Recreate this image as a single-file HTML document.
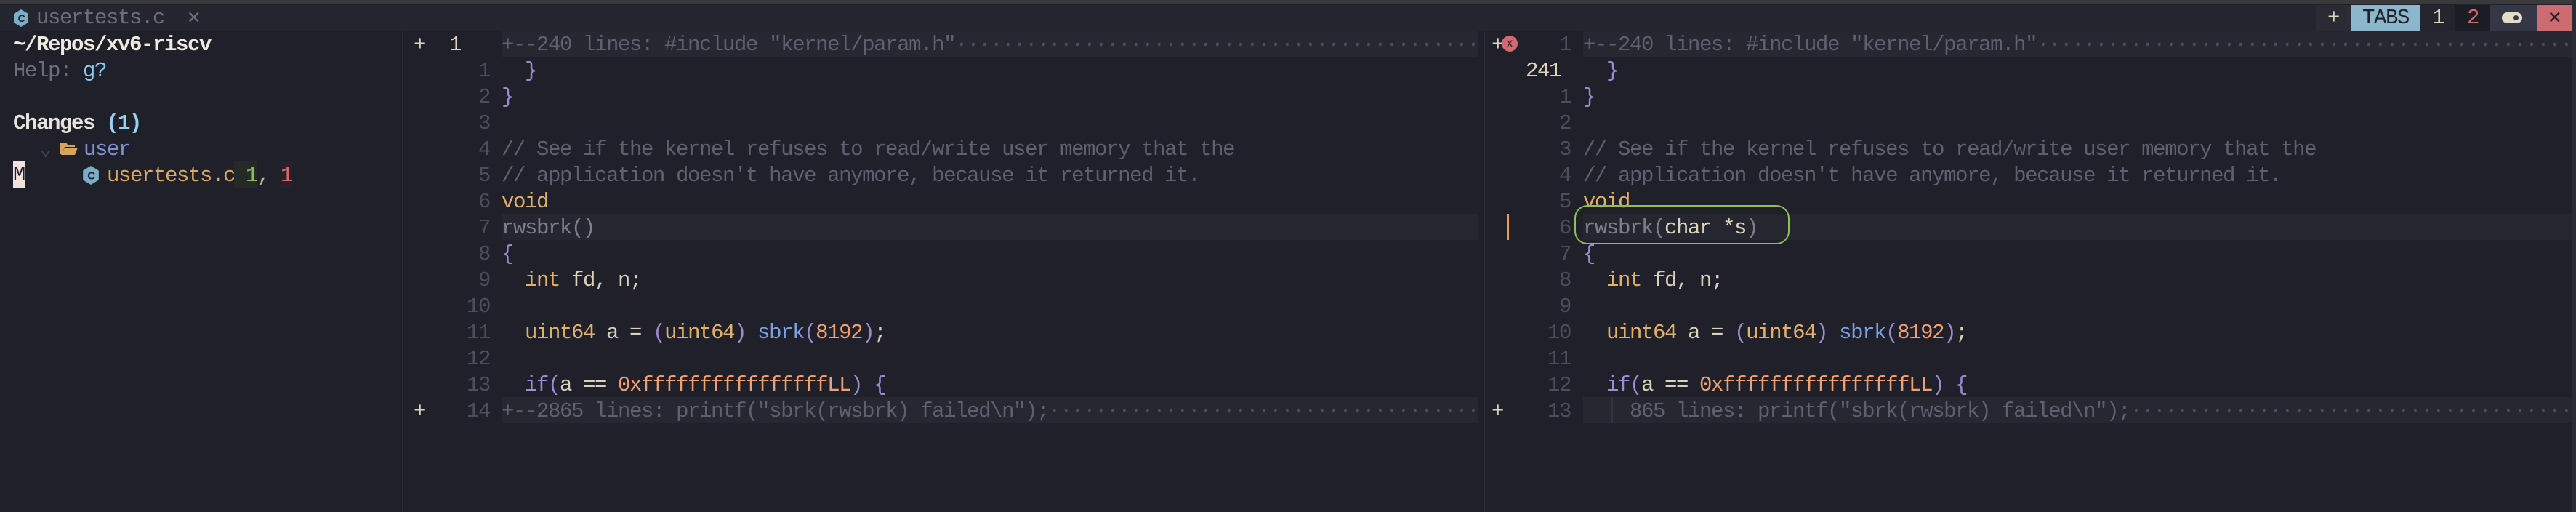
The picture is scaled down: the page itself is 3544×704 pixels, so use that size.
<!DOCTYPE html>
<html><head><meta charset="utf-8"><style>
*{margin:0;padding:0;box-sizing:border-box}
body{width:3544px;height:704px;background:#1f2029;overflow:hidden;position:relative;font-family:"Liberation Mono",monospace;font-size:29px;letter-spacing:-1.4px;color:#d8d2bc}
.a{position:absolute;white-space:pre;line-height:40px;height:36px}
.top{position:absolute;left:0;top:0;width:3544px;height:6px;background:#3a3a3c;border-bottom:1px solid #111}
.tabline{position:absolute;left:0;top:7px;width:3544px;height:35px;background:#24252e}
.ln{color:#4b4e5d;text-align:right}
.cm{color:#5d6070}
.fold{color:#5d6070;background:#262731;overflow:hidden}
.kw{color:#e3b06a}
.br{color:#9c8ad0}
.pl{color:#a08bd8}
.nu{color:#f0a070}
.fn{color:#7c9fe0}
.gr{color:#7c7f8c}
.cr{color:#ddd6bd}
.sep{position:absolute;top:42px;width:2px;height:662px;background:#2b2c36}
</style></head><body>
<div class="top"></div>
<div class="tabline"></div>
<svg style="position:absolute;left:18px;top:13px" width="22" height="24" viewBox="0 0 22 24"><polygon points="11,0 21,6 21,18 11,24 1,18 1,6" fill="#79aec6"/><text x="11" y="17" font-family="Liberation Sans" font-weight="bold" font-size="14" text-anchor="middle" fill="#1f2029">C</text></svg>
<div class="a" style="left:50px;top:5px;color:#6a6d7a">usertests.c  ✕</div>
<div class="a" style="left:3186px;top:7px;width:48px;height:35px;line-height:35px;background:#2a2b35;text-align:center;color:#ddd6bd">+</div>
<div class="a" style="left:3234px;top:7px;width:96px;height:35px;line-height:35px;background:#8cb6cc;text-align:center;color:#1f2029">TABS</div>
<div class="a" style="left:3330px;top:7px;width:48px;height:35px;line-height:35px;background:#24252e;text-align:center;color:#ddd6bd">1</div>
<div class="a" style="left:3378px;top:7px;width:48px;height:35px;line-height:35px;background:#1b1c24;text-align:center;color:#d06a70">2</div>
<div class="a" style="left:3426px;top:7px;width:64px;height:35px;background:#363746"><div style="position:absolute;left:16px;top:10px;width:28px;height:15px;border-radius:8px;background:#e4dcc4"><div style="position:absolute;right:5px;top:4px;width:7px;height:7px;border-radius:50%;background:#363746"></div></div></div>
<div class="a" style="left:3490px;top:7px;width:48px;height:35px;line-height:35px;background:#cc6b70;text-align:center;color:#1f2029">✕</div>
<div style="position:absolute;left:3538px;top:0;width:6px;height:704px;background:#2b2c33"></div>

<div class="a" style="left:18px;top:42px;color:#eeeae0;font-weight:bold">~/Repos/xv6-riscv</div>
<div class="a" style="left:18px;top:78px;color:#6a6d7a">Help: <span style="color:#8cc8f0">g?</span></div>
<div class="a" style="left:18px;top:150px;color:#e6e2dc;font-weight:bold">Changes <span style="color:#9ccff0">(1)</span></div>
<div class="a" style="left:54px;top:186px;color:#3e4150">⌄</div>
<svg style="position:absolute;left:83px;top:194px" width="24" height="20" viewBox="0 0 24 20"><path d="M0 2h8l2 3h10v3H6L2 18H0z" fill="#d6a460"/><path d="M6 9h18l-4 10H1z" fill="#d6a460"/></svg>
<div class="a" style="left:115px;top:186px;color:#7d92d0">user</div>
<div class="a" style="left:18px;top:222px;width:16px;background:#f2e1de;color:#1f2029;line-height:38px">M</div>
<svg style="position:absolute;left:113px;top:228px" width="24" height="26" viewBox="0 0 22 24"><polygon points="11,0 21,6 21,18 11,24 1,18 1,6" fill="#79aec6"/><text x="11" y="17" font-family="Liberation Sans" font-weight="bold" font-size="14" text-anchor="middle" fill="#1f2029">C</text></svg>
<div class="a" style="left:147px;top:222px;color:#dca862">usertests.c</div>
<div class="a" style="left:322px;top:222px;width:32px;background:#262a26;color:#8fb860;text-align:right">1</div>
<div class="a" style="left:354px;top:222px;color:#b8b2a0">,</div>
<div class="a" style="left:386px;top:222px;width:16px;background:#2c2028;color:#d06a70">1</div>

<div class="sep" style="left:553px"></div>
<div class="sep" style="left:2041px"></div>

<div class="a" style="left:690px;top:294px;width:1344px;background:#252630"></div>
<div class="a" style="left:569px;top:42px;color:#ddd6bd">+</div>
<div class="a" style="left:618px;top:42px;color:#ddd6bd">1</div>
<div class="a fold" style="left:690px;top:42px;width:1344px">+--240 lines: #include "kernel/param.h"<span style="color:#4b4e5d">··································································</span></div>
<div class="a ln" style="left:610px;top:78px;width:64px">1</div><div class="a br" style="left:690px;top:78px">  }</div>
<div class="a ln" style="left:610px;top:114px;width:64px">2</div><div class="a br" style="left:690px;top:114px">}</div>
<div class="a ln" style="left:610px;top:150px;width:64px">3</div>
<div class="a ln" style="left:610px;top:186px;width:64px">4</div><div class="a cm" style="left:690px;top:186px">// See if the kernel refuses to read/write user memory that the</div>
<div class="a ln" style="left:610px;top:222px;width:64px">5</div><div class="a cm" style="left:690px;top:222px">// application doesn't have anymore, because it returned it.</div>
<div class="a ln" style="left:610px;top:258px;width:64px">6</div><div class="a kw" style="left:690px;top:258px">void</div>
<div class="a ln" style="left:610px;top:294px;width:64px">7</div><div class="a gr" style="left:690px;top:294px">rwsbrk()</div>
<div class="a ln" style="left:610px;top:330px;width:64px">8</div><div class="a br" style="left:690px;top:330px">{</div>
<div class="a ln" style="left:610px;top:366px;width:64px">9</div><div class="a" style="left:690px;top:366px">  <span class="kw">int</span> fd, n;</div>
<div class="a ln" style="left:610px;top:402px;width:64px">10</div>
<div class="a ln" style="left:610px;top:438px;width:64px">11</div><div class="a" style="left:690px;top:438px">  <span class="kw">uint64</span> a = <span class="br">(</span><span class="kw">uint64</span><span class="br">)</span> <span class="fn">sbrk</span><span class="br">(</span><span class="nu">8192</span><span class="br">)</span>;</div>
<div class="a ln" style="left:610px;top:474px;width:64px">12</div>
<div class="a ln" style="left:610px;top:510px;width:64px">13</div><div class="a" style="left:690px;top:510px">  <span class="pl">if(</span>a == <span class="nu">0xffffffffffffffffLL</span><span class="br">)</span> <span class="br">{</span></div>
<div class="a" style="left:569px;top:546px;color:#ddd6bd">+</div>
<div class="a ln" style="left:610px;top:546px;width:64px">14</div>
<div class="a fold" style="left:690px;top:546px;width:1344px">+--2865 lines: printf("sbrk(rwsbrk) failed\n");<span style="color:#4b4e5d">·······································</span></div>

<div class="a" style="left:2178px;top:294px;width:1360px;background:#252630"></div>
<div style="position:absolute;left:2073px;top:294px;width:3px;height:36px;background:#ec9c48"></div>
<div class="a" style="left:2052px;top:42px;color:#ddd6bd">+</div>
<div style="position:absolute;left:2066px;top:49px;width:22px;height:22px;border-radius:50%;background:#d06a70;color:#2a1a1e;font-size:16px;letter-spacing:0;line-height:22px;text-align:center;font-family:'Liberation Sans',sans-serif">x</div>
<div class="a ln" style="left:2097px;top:42px;width:64px">1</div>
<div class="a fold" style="left:2178px;top:42px;width:1360px">+--240 lines: #include "kernel/param.h"<span style="color:#4b4e5d">··································································</span></div>
<div class="a" style="left:2099px;top:78px;color:#ddd6bd">241</div><div class="a br" style="left:2178px;top:78px">  }</div>
<div class="a ln" style="left:2097px;top:114px;width:64px">1</div><div class="a br" style="left:2178px;top:114px">}</div>
<div class="a ln" style="left:2097px;top:150px;width:64px">2</div>
<div class="a ln" style="left:2097px;top:186px;width:64px">3</div><div class="a cm" style="left:2178px;top:186px">// See if the kernel refuses to read/write user memory that the</div>
<div class="a ln" style="left:2097px;top:222px;width:64px">4</div><div class="a cm" style="left:2178px;top:222px">// application doesn't have anymore, because it returned it.</div>
<div class="a ln" style="left:2097px;top:258px;width:64px">5</div><div class="a kw" style="left:2178px;top:258px">void</div>
<div class="a ln" style="left:2097px;top:294px;width:64px">6</div><div class="a gr" style="left:2178px;top:294px">rwsbrk(<span class="cr">char *s</span>)</div>
<div style="position:absolute;left:2166px;top:282px;width:296px;height:54px;border:2px solid #8cc050;border-radius:18px"></div>
<div class="a ln" style="left:2097px;top:330px;width:64px">7</div><div class="a br" style="left:2178px;top:330px">{</div>
<div class="a ln" style="left:2097px;top:366px;width:64px">8</div><div class="a" style="left:2178px;top:366px">  <span class="kw">int</span> fd, n;</div>
<div class="a ln" style="left:2097px;top:402px;width:64px">9</div>
<div class="a ln" style="left:2097px;top:438px;width:64px">10</div><div class="a" style="left:2178px;top:438px">  <span class="kw">uint64</span> a = <span class="br">(</span><span class="kw">uint64</span><span class="br">)</span> <span class="fn">sbrk</span><span class="br">(</span><span class="nu">8192</span><span class="br">)</span>;</div>
<div class="a ln" style="left:2097px;top:474px;width:64px">11</div>
<div class="a ln" style="left:2097px;top:510px;width:64px">12</div><div class="a" style="left:2178px;top:510px">  <span class="pl">if(</span>a == <span class="nu">0xffffffffffffffffLL</span><span class="br">)</span> <span class="br">{</span></div>
<div class="a" style="left:2052px;top:546px;color:#ddd6bd">+</div>
<div class="a ln" style="left:2097px;top:546px;width:64px">13</div>
<div class="a fold" style="left:2178px;top:546px;width:1360px">    865 lines: printf("sbrk(rwsbrk) failed\n");<span style="color:#4b4e5d">·········································</span></div>
<div style="position:absolute;left:2217px;top:546px;width:2px;height:36px;background:#33343f"></div>
</body></html>
